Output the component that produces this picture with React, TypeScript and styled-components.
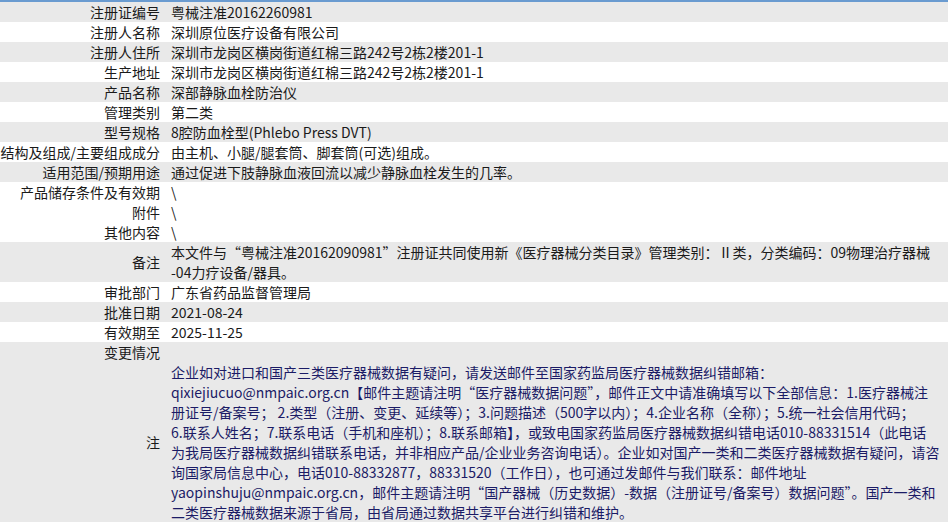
import React from "react";
import styled, { createGlobalStyle } from "styled-components";

const Global = createGlobalStyle`
  html, body { margin: 0; padding: 0; background: #ffffff; }
  body {
    font-family: "Noto Sans CJK SC", "Noto Sans", "Liberation Sans", sans-serif;
    font-size: 14px;
    color: #1a1a1a;
  }
`;

const Table = styled.div`
  width: 948px;
  border-top: 2px solid #6a9bd0;
  display: flex;
  flex-direction: column;
`;

const Row = styled.div<{ $shade?: boolean }>`
  display: grid;
  grid-template-columns: 166px 1fr;
  background: ${(p) => (p.$shade ? "#e9e9e9" : "#ffffff")};
  line-height: 20px;
`;

const Label = styled.div`
  display: flex;
  align-items: center;
  justify-content: flex-end;
  padding-right: 6px;
  white-space: nowrap;
`;

const Value = styled.div`
  padding-left: 5px;
  white-space: nowrap;
`;

const Line = styled.div`
  white-space: nowrap;
`;

const NoteValue = styled.div`
  padding-left: 5px;
  color: #1b1b66;
`;

type Item = { label: string; value: string[]; shade: boolean };

const items: Item[] = [
  { label: "注册证编号", value: ["粤械注准20162260981"], shade: true },
  { label: "注册人名称", value: ["深圳原位医疗设备有限公司"], shade: false },
  { label: "注册人住所", value: ["深圳市龙岗区横岗街道红棉三路242号2栋2楼201-1"], shade: true },
  { label: "生产地址", value: ["深圳市龙岗区横岗街道红棉三路242号2栋2楼201-1"], shade: false },
  { label: "产品名称", value: ["深部静脉血栓防治仪"], shade: true },
  { label: "管理类别", value: ["第二类"], shade: false },
  { label: "型号规格", value: ["8腔防血栓型(Phlebo Press DVT)"], shade: true },
  { label: "结构及组成/主要组成成分", value: ["由主机、小腿/腿套筒、脚套筒(可选)组成。"], shade: false },
  { label: "适用范围/预期用途", value: ["通过促进下肢静脉血液回流以减少静脉血栓发生的几率。"], shade: true },
  { label: "产品储存条件及有效期", value: ["\\"], shade: false },
  { label: "附件", value: ["\\"], shade: false },
  { label: "其他内容", value: ["\\"], shade: false },
  {
    label: "备注",
    value: [
      "本文件与“粤械注准20162090981”注册证共同使用新《医疗器械分类目录》管理类别：Ⅱ类，分类编码：09物理治疗器械",
      "-04力疗设备/器具。",
    ],
    shade: true,
  },
  { label: "审批部门", value: ["广东省药品监督管理局"], shade: false },
  { label: "批准日期", value: ["2021-08-24"], shade: true },
  { label: "有效期至", value: ["2025-11-25"], shade: false },
  { label: "变更情况", value: [""], shade: true },
];

const noteLines = [
  "企业如对进口和国产三类医疗器械数据有疑问，请发送邮件至国家药监局医疗器械数据纠错邮箱：",
  "qixiejiucuo@nmpaic.org.cn【邮件主题请注明“医疗器械数据问题”，邮件正文中请准确填写以下全部信息：1.医疗器械注",
  "册证号/备案号； 2.类型（注册、变更、延续等）；3.问题描述（500字以内）；4.企业名称（全称）；5.统一社会信用代码；",
  "6.联系人姓名；7.联系电话（手机和座机）；8.联系邮箱】，或致电国家药监局医疗器械数据纠错电话010-88331514（此电话",
  "为我局医疗器械数据纠错联系电话，并非相应产品/企业业务咨询电话）。企业如对国产一类和二类医疗器械数据有疑问，请咨",
  "询国家局信息中心，电话010-88332877，88331520（工作日），也可通过发邮件与我们联系：邮件地址",
  "yaopinshuju@nmpaic.org.cn，邮件主题请注明“国产器械（历史数据）-数据（注册证号/备案号）数据问题”。国产一类和",
  "二类医疗器械数据来源于省局，由省局通过数据共享平台进行纠错和维护。",
];

export default function App() {
  return (
    <>
      <Global />
      <Table>
        {items.map((it) => (
          <Row key={it.label} $shade={it.shade}>
            <Label>{it.label}</Label>
            <Value>
              {it.value.map((v, i) => (
                <Line key={i}>{v || "\u00a0"}</Line>
              ))}
            </Value>
          </Row>
        ))}
        <Row $shade>
          <Label>注</Label>
          <NoteValue>
            {noteLines.map((l, i) => (
              <Line key={i}>{l}</Line>
            ))}
          </NoteValue>
        </Row>
      </Table>
    </>
  );
}
